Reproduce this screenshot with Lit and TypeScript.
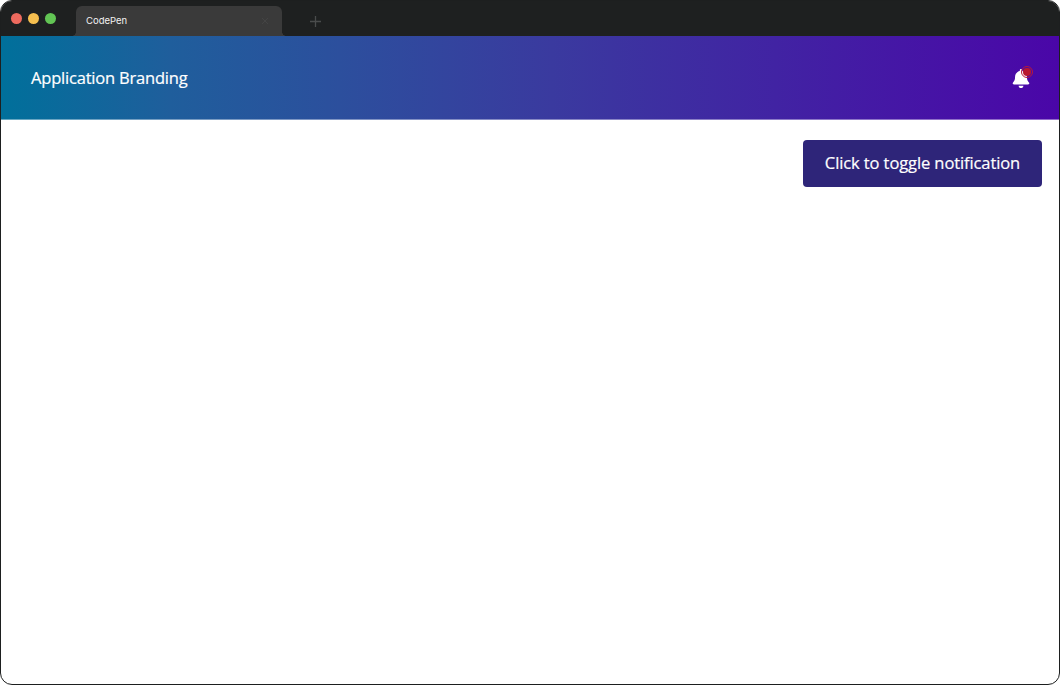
import { LitElement, html, css } from "lit";
import { customElement } from "lit/decorators.js";

@customElement("app-root")
export class AppRoot extends LitElement {
  static styles = css`
    :host { display: block; width: 1060px; height: 685px; background: #fff; }
    .window {
      box-sizing: border-box; width: 1060px; height: 685px; border: 1px solid #1d1f1f;
      border-radius: 12px; overflow: hidden; display: flex; flex-direction: column; background: #fff;
    }
    .chrome {
      height: 35px; flex: none; background: #1e2020; display: flex; align-items: flex-end;
      padding-left: 10px; box-sizing: border-box;
    }
    .lights { display: flex; gap: 6px; align-self: flex-start; margin-top: 12px; width: 65px; }
    .light { width: 11px; height: 11px; border-radius: 50%; }
    .tab {
      width: 206px; height: 30px; box-sizing: border-box; background: #3a3a3a; border-radius: 6px 6px 0 0;
      display: flex; align-items: center; justify-content: space-between; padding: 0 13px 1px 10px;
      color: #f2f2f2; font: 9.5px/1 Inter, "Liberation Sans", sans-serif; position: relative;
    }
    .tab::before, .tab::after {
      content: ""; position: absolute; bottom: 0; width: 4px; height: 4px;
    }
    .tab::before { left: -4px; background: radial-gradient(circle at 0 0, transparent 3.6px, #3a3a3a 4px); }
    .tab::after { right: -4px; background: radial-gradient(circle at 100% 0, transparent 3.6px, #3a3a3a 4px); }
    .tab svg { display: block; }
    .plus { margin: 0 0 9px 27.5px; display: block; }
    header {
      height: 84px; flex: none; box-sizing: border-box; display: flex; align-items: center; justify-content: space-between;
      padding: 1px 29px 0 30px;
      background: linear-gradient(90deg, #00709b 0%, #1f5e9c 16%, #2c4f9d 32%, #3a3a9f 52%, #4a06a8 100%);
      box-shadow: inset 0 -1px 0 #ffffff66; color: #fff;
    }
    .brand { font: 500 16.5px/1 "Open Sans", sans-serif; letter-spacing: -0.2px; -webkit-text-stroke: 0.2px #fff; }
    .bell { position: relative; width: 18px; height: 19px; display: flex; }
    .dot {
      position: absolute; left: 11px; top: -1px; width: 8px; height: 8px; border-radius: 50%;
      background: #b8182f; outline: 1px solid #b8183a; outline-offset: 1.5px;
    }
    main { flex: 1; display: flex; justify-content: flex-end; align-items: flex-start; padding: 20px 17px; }
    button {
      width: 239px; height: 47px; border: none; border-radius: 4px; background: #2e2579; color: #fff;
      font: 500 16.5px/1 "Open Sans", sans-serif; padding: 0; letter-spacing: -0.1px; -webkit-text-stroke: 0.2px #fff;
    }
  `;

  render() {
    return html`<div class="window">
      <div class="chrome">
        <div class="lights">
          <span class="light" style="background:#ed6a5e"></span>
          <span class="light" style="background:#f5bf4f"></span>
          <span class="light" style="background:#62c554"></span>
        </div>
        <div class="tab">
          <span>CodePen</span>
          <svg width="8" height="8" viewBox="0 0 8 8"><path d="M1 1l6 6M7 1l-6 6" stroke="#444" stroke-width="1"/></svg>
        </div>
        <svg class="plus" width="11" height="11" viewBox="0 0 11 11"><path d="M5.500 0v11M0 5.500h11" stroke="#4a4c4c" stroke-width="1.300"/></svg>
      </div>
      <header>
        <div class="brand">Application Branding</div>
        <div class="bell">
          <svg width="18" height="19" viewBox="0 0 448 512" fill="#fff">
            <path d="M224 512c35.300 0 64-28.700 64-64H160c0 35.300 28.700 64 64 64zm215.400-149.700c-19.300-20.800-55.500-52-55.500-154.300 0-77.700-54.500-139.900-127.900-155.200V32c0-17.700-14.300-32-32-32s-32 14.300-32 32v20.800C118.600 68.100 64.100 130.300 64.100 208c0 102.300-36.200 133.500-55.500 154.300-6 6.400-8.700 14.100-8.600 21.700.1 16.400 13 32 32.100 32h383.800c19.100 0 32-15.600 32.100-32 .1-7.600-2.600-15.300-8.600-21.700z"/>
          </svg>
          <span class="dot"></span>
        </div>
      </header>
      <main><button>Click to toggle notification</button></main>
    </div>`;
  }
}
